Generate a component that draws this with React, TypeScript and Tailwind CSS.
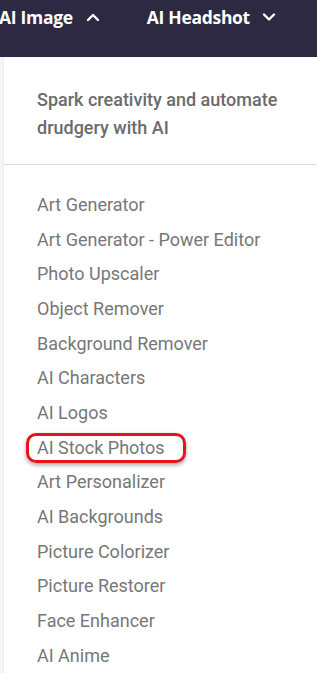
import React from "react";

const items = [
  "Art Generator",
  "Art Generator - Power Editor",
  "Photo Upscaler",
  "Object Remover",
  "Background Remover",
  "AI Characters",
  "AI Logos",
  "AI Stock Photos",
  "Art Personalizer",
  "AI Backgrounds",
  "Picture Colorizer",
  "Picture Restorer",
  "Face Enhancer",
  "AI Anime",
];

function Chevron({ up }: { up?: boolean }) {
  return (
    <svg width="14" height="14" viewBox="0 0 14 14" fill="none">
      <path
        d={up ? "M2 10 L7 5 L12 10" : "M2 4.5 L7 9.5 L12 4.5"}
        stroke="white"
        strokeWidth="2.4"
        strokeLinecap="round"
        strokeLinejoin="round"
      />
    </svg>
  );
}

export default function App() {
  return (
    <div className="w-[317px] h-[686px] overflow-hidden bg-white" style={{ fontFamily: "Roboto, sans-serif" }}>
      <div
        className="h-[57px] bg-[#2e2943] flex items-start pt-[3px] text-white text-[17.5px] font-bold"
        style={{ fontFamily: "'Open Sans', sans-serif" }}
      >
        <div className="flex items-center h-[28px] ml-[-1px]">
          <span className="tracking-[-0.3px]">AI Image</span>
          <span className="ml-[13px]"><Chevron up /></span>
        </div>
        <div className="flex items-center h-[28px] ml-[47px]">
          <span className="tracking-[-0.3px]">AI Headshot</span>
          <span className="ml-[12px]"><Chevron /></span>
        </div>
      </div>
      <div className="flex">
        <div className="w-[3px] bg-[#f5f6f8]" />
        <div className="flex-1 border-l border-[#ececec]">
          <div className="pl-[33px] pr-4 pt-[29px] pb-[22px] border-b border-[#dcdcdc] text-[18px] font-medium leading-[28px] text-[#6b6b6b]">
            Spark creativity and automate drudgery with AI
          </div>
          <div className="pl-[33px] pt-[22px] flex flex-col">
            {items.map((t) => (
              <div key={t} className="relative h-[34.7px] flex items-center text-[18px] text-[#777777] whitespace-nowrap">
                {t}
                {t === "AI Stock Photos" && (
                  <div className="absolute left-[-11px] top-[3px] w-[160px] h-[30px] rounded-[10px] border-[3px] border-[#e3151b] shadow-[0_2px_4px_rgba(0,0,0,0.35)]" />
                )}
              </div>
            ))}
          </div>
        </div>
      </div>
    </div>
  );
}
